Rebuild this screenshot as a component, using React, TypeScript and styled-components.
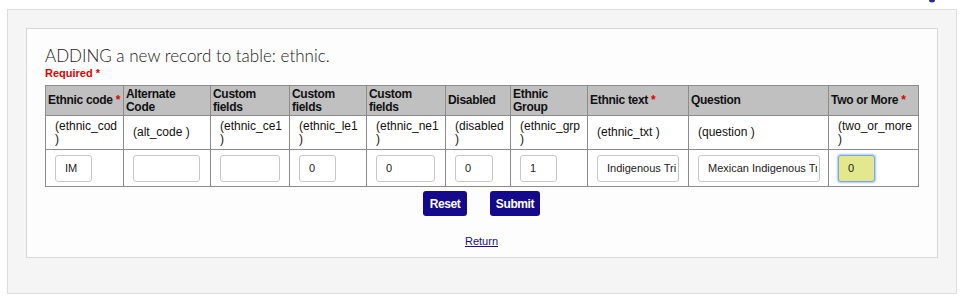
import React from "react";
import styled, { createGlobalStyle } from "styled-components";

const GlobalStyle = createGlobalStyle`
  html, body {
    margin: 0;
    padding: 0;
    background: #ffffff;
    font-family: "Liberation Sans", Arial, sans-serif;
  }
`;

const Page = styled.div`
  width: 964px;
  height: 300px;
  overflow: hidden;
  box-sizing: border-box;
`;

const TopStrip = styled.div`
  height: 9px;
  display: flex;
  justify-content: flex-end;
  align-items: flex-start;
  padding-right: 28px;
  overflow: hidden;
`;

const OuterPanel = styled.div`
  margin: 0 7px;
  width: 950px;
  height: 285px;
  box-sizing: border-box;
  background: #f5f5f5;
  border: 1px solid #dcdcdc;
  padding: 18px 18px 0 18px;
`;

const InnerPanel = styled.div`
  width: 912px;
  height: 230px;
  box-sizing: border-box;
  background: #fdfdfd;
  border: 1px solid #d8d8d8;
  padding: 16px 18px 0 18px;
`;

const Title = styled.h1`
  margin: 0;
  font-family: "Lato", "Open Sans", sans-serif;
  font-weight: 300;
  font-size: 17px;
  line-height: 21px;
  color: #222;
`;

const Required = styled.div`
  color: #e00000;
  font-weight: bold;
  font-size: 11px;
  line-height: 14px;
  margin-bottom: 5px;
`;

const Table = styled.table`
  border-collapse: collapse;
  table-layout: fixed;
  width: 873px;
  font-size: 12px;
  color: #111;
`;

const HeadCell = styled.th`
  background: #c0c0c0;
  border: 1px solid #8c8c8c;
  text-align: left;
  font-weight: bold;
  padding: 0 1px 0 2px;
  height: 29px;
  line-height: 13px;
  letter-spacing: -0.3px;
  white-space: nowrap;
  vertical-align: middle;
`;

const Star = styled.span`
  color: #e00000;
`;

const NameCell = styled.td`
  border: 1px solid #8c8c8c;
  padding: 0 4px 0 9px;
  height: 33px;
  line-height: 13px;
  vertical-align: middle;
  background: #fff;
`;

const InputCell = styled.td`
  border: 1px solid #8c8c8c;
  padding: 0 8px 0 9px;
  height: 36px;
  vertical-align: middle;
  background: #fff;
`;

const Field = styled.input<{ $w: number; $focus?: boolean }>`
  display: block;
  width: ${({ $w }) => $w}px;
  height: 27px;
  box-sizing: border-box;
  border: 1px solid ${({ $focus }) => ($focus ? "#7fa6e6" : "#c8c8c8")};
  border-radius: 3px;
  background: ${({ $focus }) => ($focus ? "#e3e88c" : "#fff")};
  box-shadow: ${({ $focus }) => ($focus ? "0 0 2px 1px #a9c4f0" : "none")};
  padding: 0 2px 0 9px;
  font-family: "Liberation Sans", Arial, sans-serif;
  font-size: 11px;
  color: #222;
  outline: none;
`;

const ButtonRow = styled.div`
  display: flex;
  justify-content: center;
  gap: 23px;
  margin-top: 4px;
  width: 873px;
`;

const Button = styled.button<{ $w: number }>`
  width: ${({ $w }) => $w}px;
  background: #150a8c;
  color: #fff;
  border: none;
  border-radius: 3px;
  height: 25px;
  padding: 0;
  font-family: "Liberation Sans", Arial, sans-serif;
  font-weight: bold;
  font-size: 12px;
  letter-spacing: -0.4px;
`;

const LinkRow = styled.div`
  width: 873px;
  text-align: center;
  margin-top: 15px;
`;

const ReturnLink = styled.a`
  color: #1a1080;
  font-size: 11px;
  text-decoration: underline;
`;

type Col = {
  w: number;
  head: string[];
  star?: boolean;
  name: string;
  value: string;
  iw: number;
  focus?: boolean;
};

const cols: Col[] = [
  { w: 78, head: ["Ethnic code"], star: true, name: "(ethnic_cod )", value: "IM", iw: 37 },
  { w: 87, head: ["Alternate", "Code"], name: "(alt_code )", value: "", iw: 67 },
  { w: 79, head: ["Custom", "fields"], name: "(ethnic_ce1 )", value: "", iw: 60 },
  { w: 77, head: ["Custom", "fields"], name: "(ethnic_le1 )", value: "0", iw: 37 },
  { w: 79, head: ["Custom", "fields"], name: "(ethnic_ne1 )", value: "0", iw: 59 },
  { w: 65, head: ["Disabled"], name: "(disabled )", value: "0", iw: 38 },
  { w: 77, head: ["Ethnic", "Group"], name: "(ethnic_grp )", value: "1", iw: 37 },
  { w: 101, head: ["Ethnic text"], star: true, name: "(ethnic_txt )", value: "Indigenous Tribe", iw: 82 },
  { w: 140, head: ["Question"], name: "(question )", value: "Mexican Indigenous Tribe", iw: 122 },
  { w: 90, head: ["Two or More"], star: true, name: "(two_or_more )", value: "0", iw: 37, focus: true },
];

export default function App() {
  return (
    <Page>
      <GlobalStyle />
      <TopStrip>
        <svg width="8" height="9" viewBox="0 0 8 9">
          <ellipse cx="4" cy="0" rx="3" ry="2.5" fill="#2a2a90" />
        </svg>
      </TopStrip>
      <OuterPanel>
        <InnerPanel>
          <Title>ADDING a new record to table: ethnic.</Title>
          <Required>
            Required <span>*</span>
          </Required>
          <Table>
            <colgroup>
              {cols.map((c, i) => (
                <col key={i} style={{ width: c.w }} />
              ))}
            </colgroup>
            <thead>
              <tr>
                {cols.map((c, i) => (
                  <HeadCell key={i}>
                    {c.head.map((line, j) => (
                      <React.Fragment key={j}>
                        {j > 0 && <br />}
                        {line}
                      </React.Fragment>
                    ))}
                    {c.star && <Star> *</Star>}
                  </HeadCell>
                ))}
              </tr>
            </thead>
            <tbody>
              <tr>
                {cols.map((c, i) => (
                  <NameCell key={i}>{c.name}</NameCell>
                ))}
              </tr>
              <tr>
                {cols.map((c, i) => (
                  <InputCell key={i}>
                    <Field $w={c.iw} $focus={c.focus} defaultValue={c.value} />
                  </InputCell>
                ))}
              </tr>
            </tbody>
          </Table>
          <ButtonRow>
            <Button $w={44}>Reset</Button>
            <Button $w={50}>Submit</Button>
          </ButtonRow>
          <LinkRow>
            <ReturnLink href="#">Return</ReturnLink>
          </LinkRow>
        </InnerPanel>
      </OuterPanel>
    </Page>
  );
}
